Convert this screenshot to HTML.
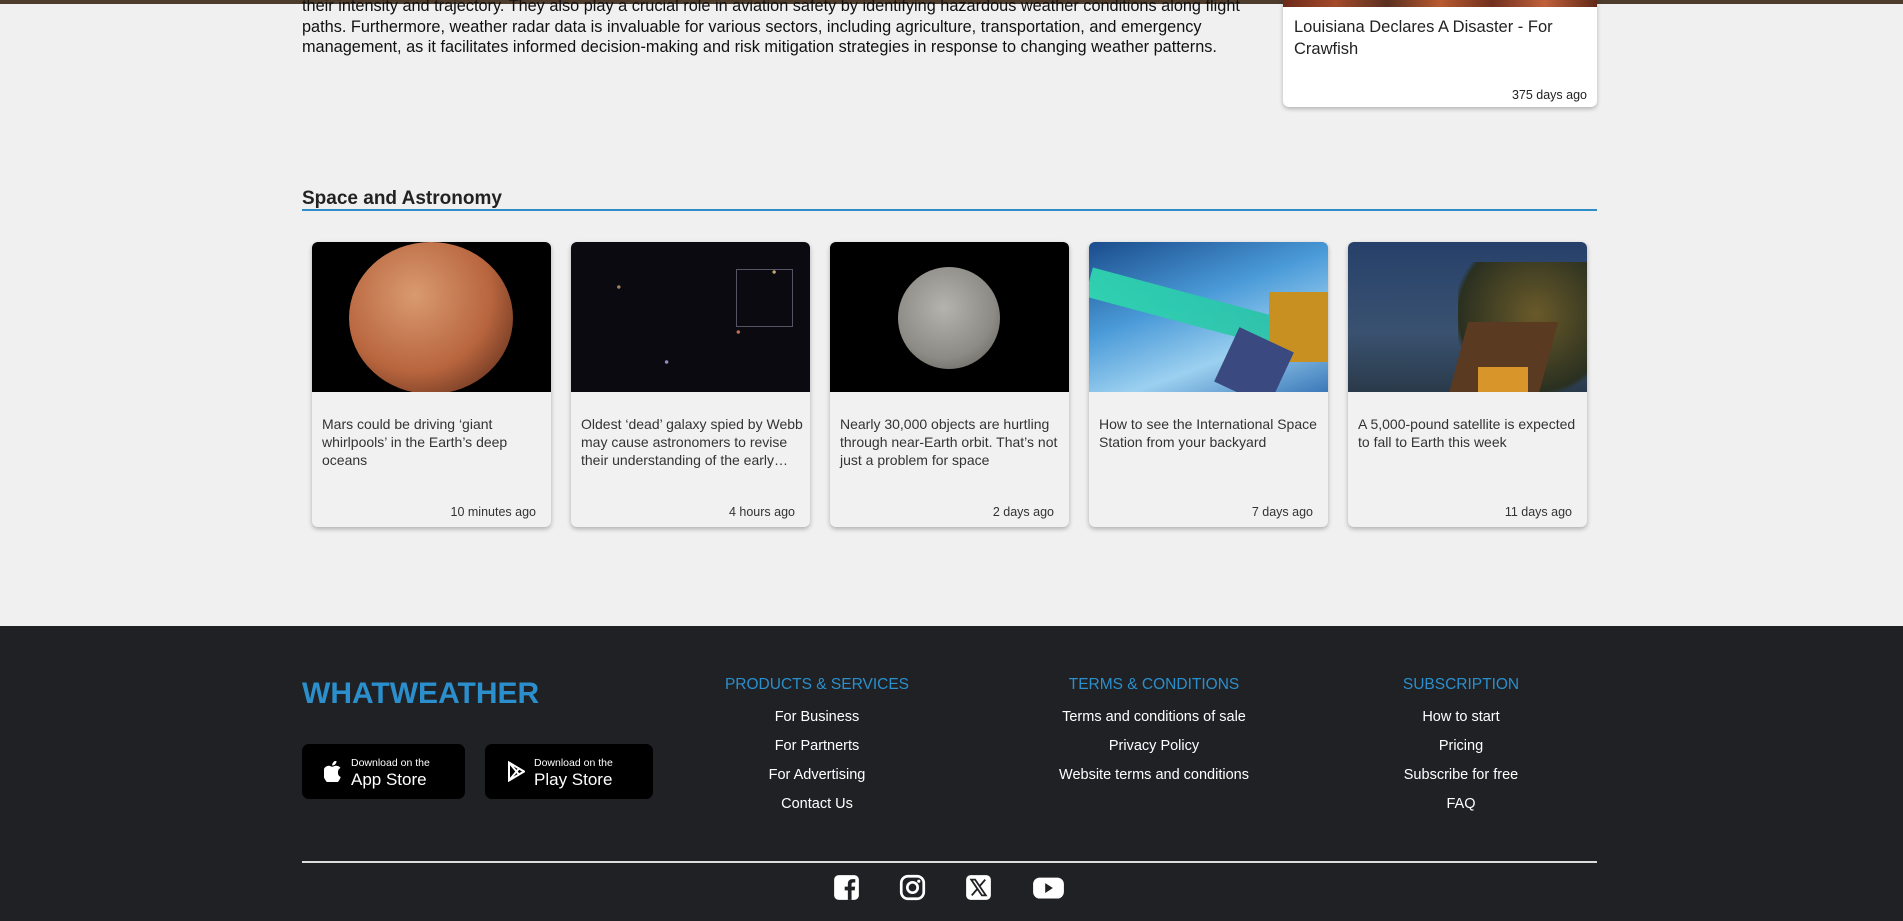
<!DOCTYPE html>
<html><head><meta charset="utf-8"><style>
*{margin:0;padding:0;box-sizing:border-box}
body{width:1903px;height:921px;overflow:hidden;background:#f0f0f0;font-family:"Liberation Sans",Arial,sans-serif;position:relative;color:#111}
.abs{position:absolute}
.topbar{left:0;top:0;width:1903px;height:4px;background:#4d3b2b}
.para{left:302px;top:-4px;width:960px;font-size:16.3px;line-height:20.5px;color:#111}
.rcard{left:1283px;top:0;width:314px;height:107px;background:#fff;border-radius:0 0 6px 6px;box-shadow:0 2px 4px rgba(0,0,0,.25)}
.rcard .img{height:7px;background:linear-gradient(90deg,#6b2a1a,#a44a2a,#5a3020,#b85a30,#70301f,#c0603a,#602818)}
.rcard .t{position:absolute;left:11px;top:16px;font-size:16.5px;line-height:22px;color:#222}
.rcard .d{position:absolute;right:10px;top:88px;font-size:12.5px;color:#222}
h2{position:absolute;left:302px;top:188px;font-size:19px;font-weight:bold;color:#222}
.uline{left:302px;top:209px;width:1295px;height:2px;background:#2f8dc8}
.card{position:absolute;top:242px;width:239px;height:285px;background:#f1f1f1;border-radius:6px;box-shadow:0 2px 5px rgba(0,0,0,.28);overflow:hidden}
.card .im{height:150px;background:#000;position:relative;overflow:hidden}
.card .t{position:absolute;left:10px;top:173px;width:222px;font-size:14px;line-height:18px;color:#333}
.card .d{position:absolute;right:15px;top:263px;font-size:12.5px;color:#333}
footer{position:absolute;left:0;top:626px;width:1903px;height:295px;background:#202124}
.logo{left:302px;top:677px;font-size:30px;font-weight:bold;color:#2a8fcc;letter-spacing:0}
.btn{top:744px;height:55px;background:#000;border-radius:7px;color:#fff}
.btn .s{position:absolute;left:49px;top:13px;font-size:10.5px}
.btn .b{position:absolute;left:49px;top:26px;font-size:17px}
.col{top:675px;width:340px;text-align:center;color:#fff;font-size:14.5px}
.col .h{color:#2a8fcc;font-size:15.5px;line-height:19px;margin-bottom:9px}
.col div.l{height:29px;line-height:29px}
.div{left:302px;top:861px;width:1295px;height:2px;background:#ddd}
.soc{top:874px;width:27px;height:27px}
</style></head><body>
<div class="abs topbar"></div>
<div class="abs para">their intensity and trajectory. They also play a crucial role in aviation safety by identifying hazardous weather conditions along flight paths. Furthermore, weather radar data is invaluable for various sectors, including agriculture, transportation, and emergency management, as it facilitates informed decision-making and risk mitigation strategies in response to changing weather patterns.</div>
<div class="abs rcard"><div class="img"></div><div class="t">Louisiana Declares A Disaster - For<br>Crawfish</div><div class="d">375 days ago</div></div>
<h2>Space and Astronomy</h2>
<div class="abs uline"></div>

<div class="card" style="left:312px"><div class="im"><div class="abs" style="left:37px;top:0;width:164px;height:152px;border-radius:50%;background:radial-gradient(circle at 40% 35%,#d99a70,#b8653e 55%,#6a3520 85%,#2a1208)"></div></div><div class="t">Mars could be driving ‘giant whirlpools’ in the Earth’s deep oceans</div><div class="d">10 minutes ago</div></div>

<div class="card" style="left:571px"><div class="im" style="background:radial-gradient(circle at 20% 30%,#a08060 0 1.5px,transparent 2px),radial-gradient(circle at 70% 60%,#c07050 0 1.5px,transparent 2px),radial-gradient(circle at 40% 80%,#9090c0 0 1.5px,transparent 2px),radial-gradient(circle at 85% 20%,#c0a070 0 1.5px,transparent 2px),#0a0a10"><div class="abs" style="left:165px;top:27px;width:57px;height:58px;border:1px solid #556"></div></div><div class="t">Oldest ‘dead’ galaxy spied by Webb may cause astronomers to revise their understanding of the early…</div><div class="d">4 hours ago</div></div>

<div class="card" style="left:830px"><div class="im"><div class="abs" style="left:68px;top:25px;width:102px;height:102px;border-radius:50%;background:radial-gradient(circle at 45% 40%,#b5b3ae,#8d8b86 60%,#55544f)"></div></div><div class="t">Nearly 30,000 objects are hurtling through near-Earth orbit. That’s not just a problem for space</div><div class="d">2 days ago</div></div>

<div class="card" style="left:1089px"><div class="im" style="background:linear-gradient(160deg,#1b4c8c,#4a9ad8 40%,#9cd0f0 70%,#3a78b8)"><div class="abs" style="left:0;top:25px;width:200px;height:30px;background:linear-gradient(90deg,#30e0b0,#20c0a0);transform:rotate(15deg);transform-origin:left;opacity:.85"></div><div class="abs" style="left:180px;top:50px;width:60px;height:70px;background:#c89020"></div><div class="abs" style="left:135px;top:95px;width:60px;height:60px;background:#3a4a80;transform:rotate(25deg)"></div></div><div class="t">How to see the International Space Station from your backyard</div><div class="d">7 days ago</div></div>

<div class="card" style="left:1348px"><div class="im" style="background:linear-gradient(180deg,#26406a,#3a5270 60%,#2a3a4a)"><div class="abs" style="left:110px;top:20px;width:129px;height:130px;background:radial-gradient(ellipse at 60% 40%,#6a5a2a,#2a3020 70%,transparent 75%)"></div><div class="abs" style="left:110px;top:80px;width:90px;height:75px;background:#5a3a20;transform:skewX(-15deg)"></div><div class="abs" style="left:130px;top:125px;width:50px;height:30px;background:#d8962a"></div></div><div class="t">A 5,000-pound satellite is expected to fall to Earth this week</div><div class="d">11 days ago</div></div>

<footer></footer>
<div class="abs logo">WHATWEATHER</div>
<div class="abs btn" style="left:302px;width:163px"><svg class="abs" style="left:22px;top:17px" width="17" height="21" viewBox="0 0 17 21"><path fill="#fff" d="M14 11c0-3 2.3-4 2.4-4-1.3-2-3.3-2.1-4-2.2-1.7-.2-3.3 1-4.1 1-.9 0-2.2-1-3.6-1C2.8 4.9 1 6 0 7.8c-2 3.4-.5 8.5 1.4 11.3.9 1.4 2 2.900 3.4 2.8 1.4-.1 1.9-.9 3.5-.9 1.7 0 2.1.9 3.6.9 1.5 0 2.4-1.4 3.300-2.7 1-1.6 1.5-3.1 1.5-3.2 0 0-2.7-1-2.7-4zM11.4 3.1c.7-.9 1.3-2.2 1.1-3.5-1.1 0-2.4.7-3.2 1.6-.7.8-1.3 2.1-1.1 3.3 1.2.1 2.4-.6 3.2-1.4z"/></svg><div class="s">Download on the</div><div class="b">App Store</div></div>
<div class="abs btn" style="left:485px;width:168px"><svg class="abs" style="left:22px;top:17px" width="18" height="21" viewBox="0 0 18 21"><path fill="none" stroke="#fff" stroke-width="2" d="M2 1.5v18L17 10.5z M2 1.5l10 12 M2 19.5l10-12"/></svg><div class="s">Download on the</div><div class="b">Play Store</div></div>

<div class="abs col" style="left:647px"><div class="h">PRODUCTS &amp; SERVICES</div><div class="l">For Business</div><div class="l">For Partnerts</div><div class="l">For Advertising</div><div class="l">Contact Us</div></div>
<div class="abs col" style="left:984px"><div class="h">TERMS &amp; CONDITIONS</div><div class="l">Terms and conditions of sale</div><div class="l">Privacy Policy</div><div class="l">Website terms and conditions</div></div>
<div class="abs col" style="left:1291px"><div class="h">SUBSCRIPTION</div><div class="l">How to start</div><div class="l">Pricing</div><div class="l">Subscribe for free</div><div class="l">FAQ</div></div>
<div class="abs div"></div>

<svg class="abs soc" style="left:833px" viewBox="0 0 24 24"><rect x="1" y="1" width="22" height="22" rx="4" fill="#fff"/><path fill="#202124" d="M16.5 23v-8.5h2.8l.4-3.3h-3.2V9.1c0-.9.3-1.6 1.6-1.6h1.7V4.6c-.3 0-1.3-.1-2.5-.1-2.5 0-4.1 1.5-4.1 4.2v2.5H10.4v3.3h2.8V23z"/></svg>
<svg class="abs soc" style="left:899px" viewBox="0 0 24 24"><rect x="2" y="2" width="20" height="20" rx="6" fill="none" stroke="#fff" stroke-width="2.4"/><circle cx="12" cy="12" r="4.6" fill="none" stroke="#fff" stroke-width="2.4"/><circle cx="17.6" cy="6.4" r="1.4" fill="#fff"/></svg>
<svg class="abs soc" style="left:965px" viewBox="0 0 24 24"><rect x="1" y="1" width="22" height="22" rx="4" fill="#fff"/><path fill="none" stroke="#202124" stroke-width="1.6" d="M5.5 5h3.5l9.5 14h-3.5z M18 5l-5 5.8 M6 19l5.2-6"/></svg>
<svg class="abs soc" style="left:1032px;width:33px" viewBox="0 0 30 24"><rect x="1" y="3" width="28" height="19" rx="6" fill="#fff"/><path fill="#202124" d="M12 8v9l7-4.5z"/></svg>
</body></html>
